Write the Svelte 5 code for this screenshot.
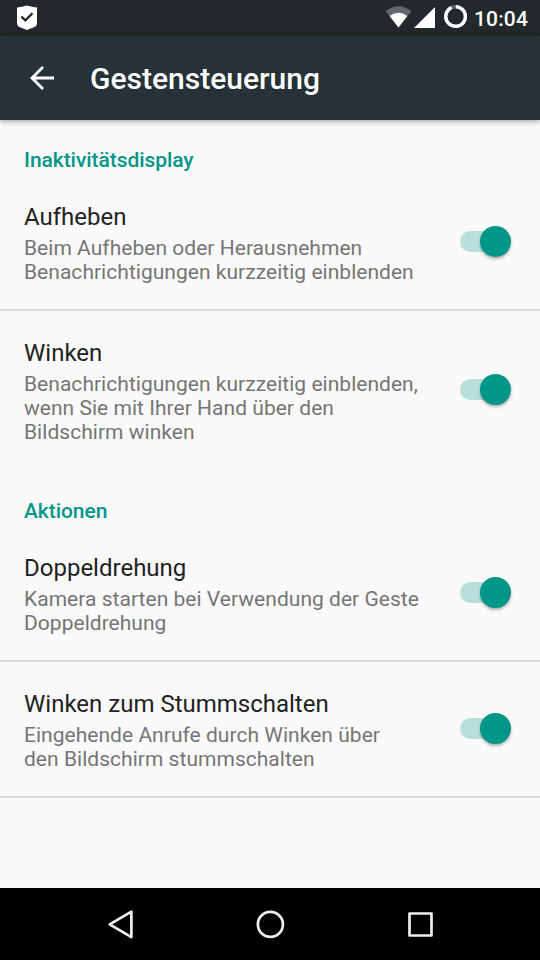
<script>
  let groups = $state([
    {
      name: "Inaktivitätsdisplay",
      items: [
        {
          title: "Aufheben",
          summary: "Beim Aufheben oder Herausnehmen\nBenachrichtigungen kurzzeitig einblenden",
          on: true,
          divider: true
        },
        {
          title: "Winken",
          summary: "Benachrichtigungen kurzzeitig einblenden,\nwenn Sie mit Ihrer Hand über den\nBildschirm winken",
          on: true,
          divider: false
        }
      ]
    },
    {
      name: "Aktionen",
      items: [
        {
          title: "Doppeldrehung",
          summary: "Kamera starten bei Verwendung der Geste\nDoppeldrehung",
          on: true,
          divider: true
        },
        {
          title: "Winken zum Stummschalten",
          summary: "Eingehende Anrufe durch Winken über\nden Bildschirm stummschalten",
          on: true,
          divider: true
        }
      ]
    }
  ]);
</script>

<div class="screen">
  <div class="status">
    <svg class="shield" width="22" height="26" viewBox="0 0 22 26">
      <path d="M1 2.5 Q6 2 11 .5 Q16 2 21 2.5 V18 Q21 21 18.5 22 L11 25 L3.5 22 Q1 21 1 18 Z" fill="#fff" />
      <path d="M5.3 11.5 L9.3 15.3 L16.5 8.2" fill="none" stroke="#23282b" stroke-width="2.3" />
    </svg>
    <svg class="wifi" width="28" height="22" viewBox="0 0 28 22">
      <path d="M.5 5 Q13.5 -4.5 26.5 5 L13.5 21.5 Z" fill="#646769" />
      <path d="M4.6 10 Q13.5 3.5 22.4 10 L13.5 21.5 Z" fill="#fff" />
    </svg>
    <svg class="signal" width="21" height="21" viewBox="0 0 21 21">
      <path d="M21 0 V21 H0 Z" fill="#fff" />
    </svg>
    <svg class="battery" width="24" height="24" viewBox="0 0 24 24">
      <circle cx="12.5" cy="11.5" r="9.8" fill="none" stroke="#646769" stroke-width="3.4" />
      <path d="M12.9 1.7 A9.8 9.8 0 1 1 8.5 2.6" fill="none" stroke="#fff" stroke-width="3.4" />
    </svg>
    <span class="clock">10:04</span>
  </div>

  <header>
    <svg class="back" width="26" height="26" viewBox="0 0 26 26">
      <path d="M25 13 H4 M14 2 L3 13 L14 24" fill="none" stroke="#fff" stroke-width="2.8" />
    </svg>
    <h1>Gestensteuerung</h1>
  </header>

  <main>
    {#each groups as group}
      <h2>{group.name}</h2>
      {#each group.items as item}
        <div class="row" class:divider={item.divider}>
          <div class="text">
            <div class="title">{item.title}</div>
            <div class="summary">{item.summary}</div>
          </div>
          <button
            class="switch"
            class:on={item.on}
            role="switch"
            aria-checked={item.on}
            aria-label={item.title}
            onclick={() => (item.on = !item.on)}
          >
            <span class="thumb"></span>
          </button>
        </div>
      {/each}
    {/each}
  </main>

  <nav>
    <svg width="30" height="30" viewBox="0 0 30 30">
      <path d="M26.4 2.7 V28.1 L4.7 15.4 Z" />
    </svg>
    <svg width="30" height="30" viewBox="0 0 30 30">
      <circle cx="15.4" cy="15.4" r="12.5" />
    </svg>
    <svg width="30" height="30" viewBox="0 0 30 30">
      <rect x="4.5" y="4.500" width="22" height="22" />
    </svg>
  </nav>
</div>

<style>
  :global(body) {
    margin: 0;
  }

  .screen {
    display: flex;
    flex-direction: column;
    width: 540px;
    height: 960px;
    overflow: hidden;
    background: #fafafa;
    font-family: Roboto, "Noto Sans", sans-serif;
  }

  svg {
    display: block;
    flex: none;
  }

  .status {
    display: flex;
    align-items: flex-start;
    box-sizing: border-box;
    height: 36px;
    padding-top: 5px;
    background: #23282b;
    color: #fff;
  }

  .shield {
    margin-left: 16px;
  }

  .wifi {
    margin: 1px 0 0 347px;
  }

  .signal {
    margin: 2px 0 0 1px;
  }

  .battery {
    margin-left: 8px;
  }

  .clock {
    margin-left: 7px;
    font-size: 21px;
    font-weight: 500;
    letter-spacing: 0.15px;
    line-height: 28px;
  }

  header {
    display: flex;
    align-items: center;
    height: 84px;
    background: #263238;
    box-shadow: 0 1px 6px rgba(0, 0, 0, 0.4);
    color: #fff;
  }

  .back {
    margin-left: 29px;
  }

  h1 {
    margin: 2px 0 0 35px;
    font-size: 30px;
    font-weight: 500;
    line-height: 36px;
  }

  main {
    flex: 1;
  }

  h2 {
    box-sizing: border-box;
    height: 57px;
    margin: 0;
    padding: 30px 24px 0;
    color: #009688;
    font-size: 21px;
    font-weight: 500;
    letter-spacing: -0.06px;
    line-height: 24px;
  }

  h2:first-child {
    height: 55px;
    padding-top: 28px;
  }

  .row {
    display: flex;
    align-items: center;
    justify-content: space-between;
    padding: 28px 30px 25px 24px;
  }

  .row.divider {
    border-bottom: 2px solid #dadada;
  }

  .title {
    margin-bottom: 5px;
    color: #212121;
    font-size: 24px;
    line-height: 28px;
  }

  .summary {
    color: #757575;
    font-size: 21px;
    letter-spacing: 0.03px;
    line-height: 24px;
    white-space: pre-line;
  }

  .switch {
    display: flex;
    align-items: center;
    width: 50px;
    height: 21px;
    margin: 0 0 4px;
    padding: 0;
    border: 0;
    border-radius: 11px;
    background: #b9b9b9;
  }

  .switch.on {
    justify-content: flex-end;
    background: #b7e0dc;
  }

  .thumb {
    width: 31px;
    height: 31px;
    margin-right: -1px;
    border-radius: 50%;
    background: #f1f1f1;
    box-shadow: 0 2px 3px rgba(0, 0, 0, 0.3);
  }

  .on .thumb {
    background: #009688;
  }

  nav {
    display: flex;
    align-items: center;
    justify-content: center;
    gap: 120px;
    height: 72px;
    background: #000;
  }

  nav svg {
    fill: none;
    stroke: #eee;
    stroke-width: 2.7;
    stroke-linejoin: round;
  }
</style>
